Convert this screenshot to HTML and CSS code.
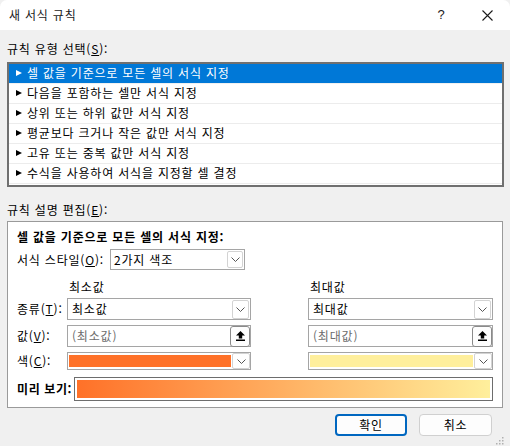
FILE: index.html
```html
<!DOCTYPE html>
<html lang="ko">
<head>
<meta charset="utf-8">
<title>새 서식 규칙</title>
<link rel="stylesheet" href="styles.css">
</head>
<body>
<div class="window">
  <div class="titlebar">
    <div class="title">새 서식 규칙</div>
    <div class="cap-btn help">?</div>
    <div class="cap-btn close">
      <svg width="11" height="11" viewBox="0 0 11 11"><path d="M0.5 0.5 L10.5 10.5 M10.5 0.5 L0.5 10.5" stroke="#1a1a1a" stroke-width="1.1" fill="none"/></svg>
    </div>
  </div>

  <div class="body">
    <div class="section-label">규칙 유형 선택(<u>S</u>):</div>
    <div class="rule-list">
      <div class="rule selected"><span class="tri"></span>셀 값을 기준으로 모든 셀의 서식 지정</div>
      <div class="rule"><span class="tri"></span>다음을 포함하는 셀만 서식 지정</div>
      <div class="rule"><span class="tri"></span>상위 또는 하위 값만 서식 지정</div>
      <div class="rule"><span class="tri"></span>평균보다 크거나 작은 값만 서식 지정</div>
      <div class="rule"><span class="tri"></span>고유 또는 중복 값만 서식 지정</div>
      <div class="rule"><span class="tri"></span>수식을 사용하여 서식을 지정할 셀 결정</div>
    </div>

    <div class="section-label second">규칙 설명 편집(<u>E</u>):</div>
    <div class="desc-box">
      <div class="desc-heading">셀 값을 기준으로 모든 셀의 서식 지정:</div>
      <div class="style-row">
        <div class="style-label">서식 스타일(<u>O</u>):</div>
        <div class="combo style-combo">
          <span class="combo-text">2가지 색조</span>
          <span class="drop-btn"><svg width="9" height="5" viewBox="0 0 9 5"><path d="M0.5 0.5 L4.5 4.5 L8.5 0.5" stroke="#555" stroke-width="1" fill="none"/></svg></span>
        </div>
      </div>

      <div class="grid">
        <div class="cell head"></div>
        <div class="cell head col-head">최소값</div>
        <div class="cell head"></div>
        <div class="cell head col-head">최대값</div>

        <div class="cell r1 row-label">종류(<u>T</u>):</div>
        <div class="cell r1 combo field">
          <span class="combo-text">최소값</span>
          <span class="drop-btn tall"><svg width="9" height="5" viewBox="0 0 9 5"><path d="M0.5 0.5 L4.5 4.5 L8.5 0.5" stroke="#555" stroke-width="1" fill="none"/></svg></span>
        </div>
        <div class="cell r1"></div>
        <div class="cell r1 combo field">
          <span class="combo-text">최대값</span>
          <span class="drop-btn tall"><svg width="9" height="5" viewBox="0 0 9 5"><path d="M0.5 0.5 L4.5 4.5 L8.5 0.5" stroke="#555" stroke-width="1" fill="none"/></svg></span>
        </div>

        <div class="cell r2 row-label">값(<u>V</u>):</div>
        <div class="cell r2 combo field">
          <span class="combo-text placeholder">(최소값)</span>
          <span class="ref-btn"><svg width="9" height="10" viewBox="0 0 9 10"><path d="M4.5 0 L9 4.6 H6.2 V7.4 H2.8 V4.6 H0 Z" fill="#000"/><rect x="0" y="8.5" width="9" height="1.5" fill="#000"/></svg></span>
        </div>
        <div class="cell r2"></div>
        <div class="cell r2 combo field">
          <span class="combo-text placeholder">(최대값)</span>
          <span class="ref-btn"><svg width="9" height="10" viewBox="0 0 9 10"><path d="M4.5 0 L9 4.6 H6.2 V7.4 H2.8 V4.6 H0 Z" fill="#000"/><rect x="0" y="8.5" width="9" height="1.5" fill="#000"/></svg></span>
        </div>

        <div class="cell r3 row-label">색(<u>C</u>):</div>
        <div class="cell r3 combo color-field">
          <span class="swatch min"></span>
          <span class="drop-btn short"><svg width="9" height="5" viewBox="0 0 9 5"><path d="M0.5 0.5 L4.5 4.5 L8.5 0.5" stroke="#555" stroke-width="1" fill="none"/></svg></span>
        </div>
        <div class="cell r3"></div>
        <div class="cell r3 combo color-field">
          <span class="swatch max"></span>
          <span class="drop-btn short"><svg width="9" height="5" viewBox="0 0 9 5"><path d="M0.5 0.5 L4.5 4.5 L8.5 0.5" stroke="#555" stroke-width="1" fill="none"/></svg></span>
        </div>
      </div>

      <div class="preview-row">
        <div class="preview-label">미리 보기:</div>
        <div class="preview-box"><div class="gradient"></div></div>
      </div>
    </div>

    <div class="footer">
      <button class="btn primary">확인</button>
      <button class="btn">취소</button>
      <svg class="grip" width="9" height="9" viewBox="0 0 9 9">
        <rect x="7" y="1" width="1.5" height="1.5" fill="#b0b0b0"/>
        <rect x="4" y="4" width="1.5" height="1.5" fill="#b0b0b0"/>
        <rect x="7" y="4" width="1.5" height="1.5" fill="#b0b0b0"/>
        <rect x="1" y="7" width="1.5" height="1.5" fill="#b0b0b0"/>
        <rect x="4" y="7" width="1.5" height="1.5" fill="#b0b0b0"/>
        <rect x="7" y="7" width="1.5" height="1.5" fill="#b0b0b0"/>
      </svg>
    </div>
  </div>
</div>
</body>
</html>
```
FILE: styles.css
```css
* { box-sizing: border-box; }
html, body {
  margin: 0;
  padding: 0;
  background: #f0f0f0;
}
body {
  font-family: "Noto Sans CJK KR", "Noto Sans", sans-serif;
  font-size: 12px;
  line-height: 14px;
  letter-spacing: 0.8px;
  color: #000;
}
u { text-underline-offset: 1px; }
.window {
  width: 510px;
  height: 446px;
  background: #f0f0f0;
  overflow: hidden;
}
.titlebar {
  height: 30px;
  background: #fff;
  display: flex;
  align-items: center;
  padding-left: 9px;
  border-top-left-radius: 7px;
  border-top-right-radius: 7px;
}
.title {
  flex: 1;
  color: #1a1a1a;
}
.cap-btn {
  width: 46px;
  height: 30px;
  display: flex;
  align-items: center;
  justify-content: center;
  color: #1a1a1a;
}
.help { font-family: "Liberation Sans", sans-serif; font-size: 13px; letter-spacing: 0; }
.body {
  padding: 0 6px 0 7px;
}
.section-label {
  margin-top: 12px;
  height: 14px;
  white-space: nowrap;
}
.section-label.second {
  margin-top: 16px;
}
.rule-list {
  margin-top: 6px;
  width: 497px;
  border: 2px solid #707070;
  background: #fff;
  padding-bottom: 1px;
}
.rule {
  height: 20px;
  border-bottom: 1px solid #ececec;
  display: flex;
  align-items: center;
  padding-left: 7px;
  padding-bottom: 1px;
  white-space: nowrap;
}
.rule.selected {
  background: #0078d7;
  color: #fff;
  border-bottom-color: #f0f0f0;
}
.tri {
  width: 0;
  height: 0;
  border-top: 3.5px solid transparent;
  border-bottom: 3.5px solid transparent;
  border-left: 6px solid currentColor;
  margin-right: 5px;
}
.desc-box {
  margin-top: 4px;
  width: 496px;
  border: 1px solid #9a9a9a;
  background: #fff;
  padding: 8px 9px 6px 9px;
}
.desc-heading {
  font-weight: 700;
  height: 14px;
  white-space: nowrap;
}
.style-row {
  margin-top: 5px;
  display: flex;
  align-items: center;
  height: 21px;
}
.style-label { width: 93px; white-space: nowrap; }
.combo {
  border: 1px solid #a5a5a5;
  background: #fff;
  display: flex;
  align-items: center;
  justify-content: space-between;
}
.style-combo {
  width: 135px;
  height: 21px;
  padding: 0 1px 0 2px;
}
.combo-text { padding-left: 1px; white-space: nowrap; }
.placeholder { color: #6d6d6d; }
.drop-btn {
  width: 16px;
  height: 17px;
  border: 1px solid #d3d3d3;
  border-radius: 2px;
  background: #fff;
  display: flex;
  align-items: center;
  justify-content: center;
}
.drop-btn.tall { width: 17px; height: 19px; }
.drop-btn.short { width: 18px; height: 16px; }
.grid {
  margin-top: 10px;
  display: grid;
  grid-template-columns: 50px 184px 57px 185px;
  grid-template-rows: 14px 22px 22px 18px;
}
.cell.r1 { margin-top: 4px; }
.cell.r2 { margin-top: 5px; }
.cell.r3 { margin-top: 5px; }
.grid { grid-template-rows: 14px 26px 27px 23px; }
.col-head { padding-left: 2px; }
.row-label { display: flex; align-items: center; white-space: nowrap; }
.field { height: 22px; padding: 0 1px 0 3px; }
.ref-btn {
  width: 20px;
  height: 21px;
  border: 1px solid #8a8a8a;
  border-radius: 3px;
  background: #fdfdfd;
  display: flex;
  align-items: center;
  justify-content: center;
  margin-right: -1px;
}
.color-field {
  height: 18px;
  padding: 0 0 0 1px;
}
.swatch {
  flex: 1;
  height: 12px;
  margin-right: 1px;
}
.swatch.min { background: #ff7128; }
.swatch.max { background: #ffef9c; }
.preview-row {
  margin-top: 7px;
  display: flex;
  align-items: center;
  height: 24px;
}
.preview-label {
  width: 57px;
  font-weight: 700;
  white-space: nowrap;
  letter-spacing: 0.6px;
}
.preview-box {
  width: 419px;
  height: 24px;
  border: 1px solid #6d6d6d;
  padding: 2px;
  background: #fff;
}
.gradient {
  height: 100%;
  background: linear-gradient(to right, #ff7128, #ffef9c);
}
.footer {
  margin-top: 6px;
  height: 32px;
  display: flex;
  justify-content: flex-end;
  align-items: flex-start;
  gap: 12px;
}
.btn {
  font-family: inherit;
  font-size: 12px;
  line-height: 14px;
  letter-spacing: 0.8px;
  width: 73px;
  height: 22px;
  border: 1px solid #d0d0d0;
  border-radius: 4px;
  background: #fdfdfd;
  color: #000;
  padding: 0;
  margin: 0;
}
.btn.primary {
  width: 72px;
  border: 2px solid #0067c0;
}
.grip {
  align-self: flex-end;
  margin-left: -9px;
  margin-bottom: 1px;
}
```
